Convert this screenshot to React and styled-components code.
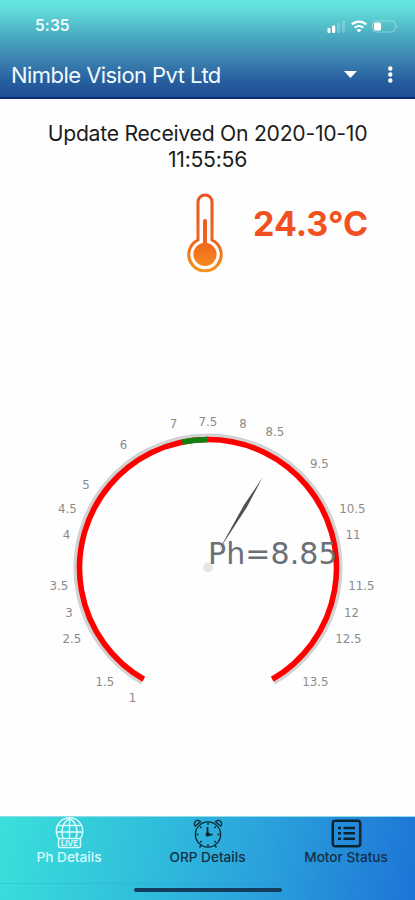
import styled, { createGlobalStyle } from 'styled-components';

const GlobalStyle = createGlobalStyle`
  * {
    box-sizing: border-box;
  }

  body {
    margin: 0;
    background: #fefefe;
    font-family: Inter, 'Liberation Sans', sans-serif;
  }
`;

const Screen = styled.div`
  display: flex;
  flex-direction: column;
  width: 415px;
  height: 900px;
  overflow: hidden;
`;

const Header = styled.header`
  flex: none;
  height: 99px;
  color: #f2fbff;
  background: linear-gradient(180deg, #66e4df 0, #62dfdb 8px, #4aabc0 36px, #3b82b0 60px, #28609f 80px, #204d94 96px);
  border-bottom: 2px solid #0b2a78;
`;

const StatusBar = styled.div`
  display: flex;
  align-items: center;
  justify-content: space-between;
  height: 50px;
  padding: 1px 16px 0 35px;
`;

const Clock = styled.span`
  font-size: 15.5px;
  font-weight: 600;
  letter-spacing: 0.1px;
`;

const StatusIcons = styled.svg`
  display: block;
  width: 74px;
  height: 16px;
`;

const Toolbar = styled.div`
  display: flex;
  align-items: center;
  height: 49px;
  padding: 0 14px 0 11px;
`;

const AppTitle = styled.h1`
  flex: 1;
  margin: 0;
  font-size: 22px;
  font-weight: 400;
  letter-spacing: -0.55px;
  white-space: nowrap;
`;

const ToolbarIcons = styled.svg`
  width: 60px;
  height: 20px;
`;

const Main = styled.main`
  flex: 1;
  display: flex;
  flex-direction: column;
  align-items: center;
`;

const UpdateText = styled.p`
  width: 340px;
  margin: 21px 0 0;
  color: #1c1c1c;
  font-size: 21.2px;
  line-height: 26px;
  letter-spacing: -0.27px;
  text-align: center;
`;

const Temperature = styled.div`
  display: flex;
  width: 100%;
  height: 84px;
  margin-top: 19px;
  padding-left: 186px;
`;

const Thermometer = styled.svg`
  width: 38px;
  height: 84px;
`;

const Degrees = styled.strong`
  margin: 12px 0 0 29px;
  color: #f1511f;
  font-size: 34px;
  font-weight: 700;
  line-height: 42px;
  white-space: nowrap;
`;

const Gauge = styled.svg`
  display: block;
  width: 415px;
  height: 320px;
  margin-top: 121px;
  font-family: 'DejaVu Sans', sans-serif;
`;

const TabBar = styled.nav`
  flex: none;
  height: 84px;
  background: linear-gradient(100deg, #3be0da 0%, #30bfdc 35%, #2a9fdc 65%, #1d74d6 100%);
  border-top: 1px solid #8fdce8;
`;

const Tabs = styled.div`
  display: grid;
  grid-template-columns: 138px 139px 138px;
  height: 67px;
  border-bottom: 1px solid rgba(20, 110, 190, 0.13);
`;

const Tab = styled.div`
  display: flex;
  flex-direction: column;
  align-items: center;
  color: ${(props) => (props.$active ? '#d8fbfb' : '#142f45')};

  svg {
    width: 34px;
    height: 32px;
    color: ${(props) => (props.$active ? '#d8fbfb' : '#0b2434')};
  }
`;

const TabLabel = styled.span`
  font-size: 13.6px;
  font-weight: 500;
  line-height: 16px;
  white-space: nowrap;
`;

const HomeIndicator = styled.div`
  width: 148px;
  height: 4px;
  margin: 4px auto 0;
  border-radius: 2px;
  background: #143c5c;
`;

const CX = 208;
const CY = 172;

// the scale runs from 1 to 14 over 300 degrees, with 7.5 straight up
const polar = (value, radius) => {
  const angle = ((value - 7.5) * (300 / 13) * Math.PI) / 180;
  return [CX + radius * Math.sin(angle), CY - radius * Math.cos(angle)];
};

const arc = (from, to, radius) => {
  const [x1, y1] = polar(from, radius);
  const [x2, y2] = polar(to, radius);
  const large = (to - from) * (300 / 13) > 180 ? 1 : 0;
  return `M${x1} ${y1}A${radius} ${radius} 0 ${large} 1 ${x2} ${y2}`;
};

const LABELS = [
  { text: '1', x: 132.5, y: 302 },
  { text: '1.5', x: 105, y: 286 },
  { text: '2.5', x: 72, y: 242.5 },
  { text: '3', x: 69, y: 217 },
  { text: '3.5', x: 59, y: 190 },
  { text: '4', x: 66.5, y: 139 },
  { text: '4.5', x: 67.5, y: 113 },
  { text: '5', x: 86, y: 88.5 },
  { text: '6', x: 123.5, y: 49 },
  { text: '7', x: 173.5, y: 28 },
  { text: '7.5', x: 208, y: 25.5 },
  { text: '8', x: 243, y: 28 },
  { text: '8.5', x: 275, y: 36 },
  { text: '9.5', x: 319.5, y: 67.5 },
  { text: '10.5', x: 352.5, y: 113 },
  { text: '11', x: 353, y: 139 },
  { text: '11.5', x: 361.5, y: 190 },
  { text: '12', x: 351.5, y: 217 },
  { text: '12.5', x: 348.5, y: 242.5 },
  { text: '13.5', x: 315.5, y: 286 },
];

const PhGauge = () => (
  <Gauge viewBox="0 0 415 320">
    <path d={arc(1, 14, 131.5)} fill="none" stroke="#d2d2d2" strokeWidth="6" />
    <path d={arc(1, 14, 128.5)} fill="none" stroke="#ff0000" strokeWidth="5.6" />
    <path d={arc(7, 7.5, 128.5)} fill="none" stroke="#108010" strokeWidth="5.6" />
    {LABELS.map((label) => (
      <text key={label.text} x={label.x} y={label.y + 4} fontSize="11.8" fill="#8b8b8b" textAnchor="middle">
        {label.text}
      </text>
    ))}
    <circle cx={CX} cy={CY - 0.5} r="5" fill="#e4e4e4" />
    <path d="M262.500 81.500L247 111L219 154L244 109Z" fill="#4c5254" />
    <text x="208" y="167.5" fontSize="30" fill="#6b7075" textLength="129.5">
      Ph=8.85
    </text>
  </Gauge>
);

const GlobeIcon = () => (
  <svg viewBox="0 0 34 32" fill="none" stroke="currentColor" strokeWidth="1.5">
    <path d="M7 22A13.200 13.200 0 1 1 28 22M17.500 2V21M11 21C8.500 14 11 4 17.500 2C24 4 26.500 14 24 21M6.500 8.500H28.500M4.500 15H30.500" />
    <rect x="6.500" y="21.500" width="22" height="9" rx="1.500" />
    <text
      x="17.500"
      y="29"
      fontSize="8"
      fontWeight="700"
      textAnchor="middle"
      textLength="17"
      fill="currentColor"
      stroke="none"
    >
      LIVE
    </text>
  </svg>
);

const AlarmIcon = () => (
  <svg viewBox="0 0 34 32" fill="none" stroke="currentColor" strokeWidth="1.300">
    <circle cx="17" cy="17.500" r="12.600" />
    <path d="M4.200 9.200A3.500 3.500 0 1 1 9.500 4.600ZM29.800 9.200A3.500 3.500 0 1 0 24.500 4.600Z" />
    <path d="M16.500 10V17.700H21.500" strokeWidth="1.800" />
    <path d="M17 6V8M17 27V29M5.500 17.500H7.500M26.500 17.500H28.500M9 9.500L10.500 11M25 9.500L23.500 11M9 25.500L10.500 24M25 25.500L23.500 24M10.500 28L8.500 30.500M23.500 28L25.500 30.500" />
    <circle cx="16.700" cy="17.500" r="1.500" fill="currentColor" />
  </svg>
);

const ListIcon = () => (
  <svg viewBox="0 0 34 32" fill="none" stroke="currentColor">
    <rect x="3.800" y="3.700" width="27.400" height="25.600" rx="2.500" strokeWidth="2.600" />
    <path d="M9 11H12M9 16.300H12M9 21.700H12M14.500 11H26M14.500 16.300H26M14.500 21.700H26" strokeWidth="2.600" />
  </svg>
);

const App = () => (
  <>
    <GlobalStyle />
    <Screen>
      <Header>
        <StatusBar>
          <Clock>5:35</Clock>
          <StatusIcons viewBox="0 0 74 16" fill="#ffffff">
            <rect x="2.500" y="10" width="3" height="5" rx="1" />
            <rect x="7" y="7.500" width="3.200" height="7.500" rx="1" />
            <rect x="12" y="4.500" width="3" height="10.500" rx="1" opacity="0.220" />
            <rect x="17" y="2.500" width="3" height="12.500" rx="1" opacity="0.220" />
            <g fill="none" stroke="#ffffff" strokeWidth="2.200">
              <path d="M26.800 6.500A10.500 10.500 0 0 1 41.200 6.500" />
              <path d="M29.700 9.700A6.300 6.300 0 0 1 38.300 9.700" />
            </g>
            <path d="M31.500 12Q34 10 36.500 12L34 14.500Z" />
            <rect x="47.500" y="3" width="22.500" height="11" rx="3" fill="none" stroke="#ffffff" opacity="0.350" />
            <path d="M71.500 6.500Q73.500 8.500 71.500 10.500Z" opacity="0.400" />
            <rect x="49" y="4.500" width="7" height="8" rx="1.500" />
          </StatusIcons>
        </StatusBar>
        <Toolbar>
          <AppTitle>Nimble Vision Pvt Ltd</AppTitle>
          <ToolbarIcons viewBox="0 0 60 20" fill="#ffffff">
            <path d="M3 6H16L9.500 13Z" />
            <circle cx="49.300" cy="3.500" r="2.200" />
            <circle cx="49.300" cy="9.500" r="2.200" />
            <circle cx="49.300" cy="15.500" r="2.200" />
          </ToolbarIcons>
        </Toolbar>
      </Header>
      <Main>
        <UpdateText>Update Received On 2020-10-10 11:55:56</UpdateText>
        <Temperature>
          <Thermometer viewBox="0 0 38 84">
            <defs>
              <linearGradient id="heat" gradientUnits="userSpaceOnUse" x1="0" y1="0" x2="0" y2="84">
                <stop offset="0" stopColor="#ef5022" />
                <stop offset="0.600" stopColor="#ef641c" />
                <stop offset="1" stopColor="#f7981f" />
              </linearGradient>
            </defs>
            <path
              d="M12 49V11A7 7 0 0 1 26 11V49A16.200 16.200 0 1 1 12 49Z"
              fill="none"
              stroke="url(#heat)"
              strokeWidth="3"
            />
            <path d="M17 52V30Q17 28 19 28Q21 28 21 30V52A11.600 11.600 0 1 1 17 52Z" fill="url(#heat)" />
          </Thermometer>
          <Degrees>24.3°C</Degrees>
        </Temperature>
        <PhGauge />
      </Main>
      <TabBar>
        <Tabs>
          <Tab $active>
            <GlobeIcon />
            <TabLabel>Ph Details</TabLabel>
          </Tab>
          <Tab>
            <AlarmIcon />
            <TabLabel>ORP Details</TabLabel>
          </Tab>
          <Tab>
            <ListIcon />
            <TabLabel>Motor Status</TabLabel>
          </Tab>
        </Tabs>
        <HomeIndicator />
      </TabBar>
    </Screen>
  </>
);

export default App;
